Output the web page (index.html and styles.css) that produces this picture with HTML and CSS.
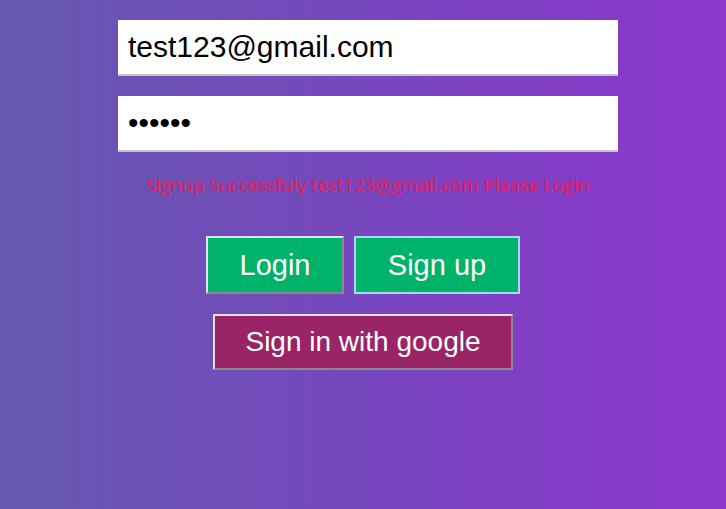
FILE: index.html
```html
<!DOCTYPE html>
<html>
<head>
<meta charset="utf-8">
<link rel="stylesheet" href="styles.css">
</head>
<body>
<main class="page">
  <form class="auth">
    <input class="field" type="email" value="test123@gmail.com">
    <input class="field" type="password" value="123456">
    <p class="message">Signup Successfuly test123@gmail.com Please Login</p>
    <div class="actions">
      <button type="button" class="btn btn-green btn-login">Login</button>
      <button type="button" class="btn btn-green btn-signup">Sign up</button>
    </div>
    <button type="button" class="btn btn-google">Sign in with google</button>
  </form>
</main>
</body>
</html>
```
FILE: styles.css
```css
html, body {
  margin: 0;
  height: 100%;
}
body {
  background: linear-gradient(to right, #6459af, #8b35cd);
  font-family: "Liberation Sans", Arial, sans-serif;
}
.page {
  padding-top: 20px;
}
.auth {
  display: flex;
  flex-direction: column;
  align-items: center;
}
.field {
  box-sizing: border-box;
  width: 500px;
  height: 56px;
  margin: 0 0 20px 10px;
  padding: 0 10px;
  border: none;
  border-bottom: 2px solid #c6c6c6;
  background: #fff;
  font-family: "Liberation Sans", Arial, sans-serif;
  font-size: 30px;
  color: #000;
  outline: none;
}
.field + .field {
  margin-bottom: 0;
}
.message {
  margin: 21px 0 0 10px;
  height: 24px;
  line-height: 24px;
  font-family: "Open Sans", "Noto Sans", sans-serif;
  font-size: 18.3px;
  color: #ee1a52;
}
.actions {
  display: flex;
  gap: 10px;
  margin-top: 39px;
}
.btn {
  box-sizing: border-box;
  height: 58px;
  padding: 0;
  font-family: "Liberation Sans", Arial, sans-serif;
  font-size: 29px;
  color: #fff;
  border: 2px solid;
  border-color: #e2e2ea #8a8a8a #8a8a8a #e2e2ea;
  cursor: pointer;
}
.btn-green {
  background: #00b36b;
}
.btn-login {
  width: 138px;
}
.btn-signup {
  width: 166px;
  border-color: #a9d6f2;
}
.btn-google {
  margin-top: 20px;
  width: 300px;
  height: 56px;
  background: #9a2566;
  font-size: 28px;
}
```
